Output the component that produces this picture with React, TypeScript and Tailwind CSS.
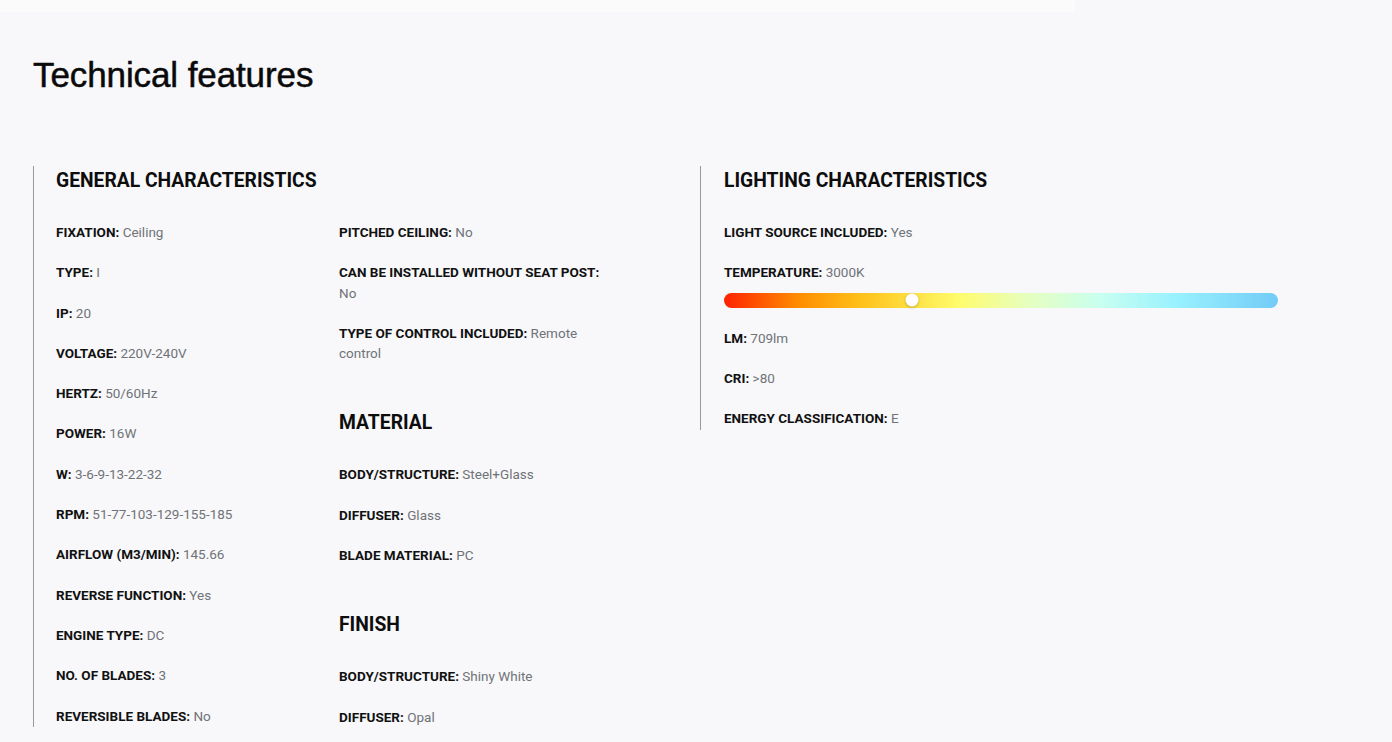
import type { ReactNode } from "react";

/* ------------------------------------------------------------------ data */

type Spec = [string, string];

const GENERAL_LEFT: Spec[] = [
  ["FIXATION", "Ceiling"],
  ["TYPE", "I"],
  ["IP", "20"],
  ["VOLTAGE", "220V-240V"],
  ["HERTZ", "50/60Hz"],
  ["POWER", "16W"],
  ["W", "3-6-9-13-22-32"],
  ["RPM", "51-77-103-129-155-185"],
  ["AIRFLOW (M3/MIN)", "145.66"],
  ["REVERSE FUNCTION", "Yes"],
  ["ENGINE TYPE", "DC"],
  ["NO. OF BLADES", "3"],
  ["REVERSIBLE BLADES", "No"],
];

const GENERAL_RIGHT: Spec[] = [
  ["PITCHED CEILING", "No"],
  ["CAN BE INSTALLED WITHOUT SEAT POST", "No"],
  ["TYPE OF CONTROL INCLUDED", "Remote control"],
];

const MATERIAL: Spec[] = [
  ["BODY/STRUCTURE", "Steel+Glass"],
  ["DIFFUSER", "Glass"],
  ["BLADE MATERIAL", "PC"],
];

const FINISH: Spec[] = [
  ["BODY/STRUCTURE", "Shiny White"],
  ["DIFFUSER", "Opal"],
];

/* ------------------------------------------------------------- pieces */

function Row({ spec, children }: { spec: Spec; children?: ReactNode }) {
  return (
    <div className="mb-5 text-[13.5px] leading-[20.3px] last:mb-0">
      <span className="font-bold text-[#111]">{spec[0]}:</span>{" "}
      <span className="text-[#6f7378]">{spec[1]}</span>
      {children}
    </div>
  );
}

function Heading({ children }: { children: ReactNode }) {
  return (
    <h2 className="mb-[27px] pt-px text-[19.3px] font-bold leading-[28px] text-[#0d0d0d]">
      {children}
    </h2>
  );
}

function TempBar({ pct }: { pct: number }) {
  return (
    <div className="relative mt-[10px] h-[15px] w-[554px] rounded-full bg-[linear-gradient(90deg,#ff2200_0%,#ff8a00_13%,#ffc21a_25%,#fffb6a_42%,#e6ffc0_55%,#c8fff0_68%,#97f1ff_82%,#72cbf6_100%)]">
      <span
        className="absolute top-1/2 h-[13px] w-[13px] -translate-x-1/2 -translate-y-1/2 rounded-full bg-white shadow-[0_1px_3px_rgba(0,0,0,0.25)]"
        style={{ left: `${pct}%` }}
      />
    </div>
  );
}

/* ------------------------------------------------------------------ page */

export default function App() {
  return (
    <div className="relative min-h-[742px] bg-[#f8f8fa] font-['Roboto',sans-serif] text-black">
      <div className="h-[12px] w-[1075px] bg-[#fbfbfc]" />
      <div className="px-[33px]">
        <h1 className="mt-[43px] font-['Liberation_Sans',Arial,sans-serif] text-[35px] leading-[40px] tracking-[-0.1px] text-[#0a0a0a] [-webkit-text-stroke:0.5px_#0a0a0a]">
          Technical features
        </h1>

        <div className="mt-[71px] flex items-start">
          {/* general */}
          <section className="w-[667px] border-l border-[#9a9a9a] pl-[22px]">
            <Heading>GENERAL CHARACTERISTICS</Heading>
            <div className="grid grid-cols-[283px_272px]">
              <div>
                {GENERAL_LEFT.map((s) => (
                  <Row key={s[0]} spec={s} />
                ))}
              </div>
              <div>
                {GENERAL_RIGHT.map((s) => (
                  <Row key={s[0]} spec={s} />
                ))}
                <div className="mt-[45px]">
                  <Heading>MATERIAL</Heading>
                </div>
                {MATERIAL.map((s) => (
                  <Row key={s[0]} spec={s} />
                ))}
                <div className="mt-[45px]">
                  <Heading>FINISH</Heading>
                </div>
                {FINISH.map((s) => (
                  <Row key={s[0]} spec={s} />
                ))}
              </div>
            </div>
          </section>

          {/* lighting */}
          <section className="border-l border-[#9a9a9a] pb-[2px] pl-[23px]">
            <Heading>LIGHTING CHARACTERISTICS</Heading>
            <Row spec={["LIGHT SOURCE INCLUDED", "Yes"]} />
            <div className="mb-5 text-[13.5px] leading-[20.3px]">
              <span className="font-bold text-[#111]">TEMPERATURE:</span>{" "}
              <span className="text-[#6f7378]">3000K</span>
              <TempBar pct={34} />
            </div>
            <Row spec={["LM", "709lm"]} />
            <Row spec={["CRI", ">80"]} />
            <div className="text-[13.5px] leading-[20.3px]">
              <span className="font-bold text-[#111]">ENERGY CLASSIFICATION:</span>{" "}
              <span className="text-[#6f7378]">E</span>
            </div>
          </section>
        </div>
      </div>
    </div>
  );
}
